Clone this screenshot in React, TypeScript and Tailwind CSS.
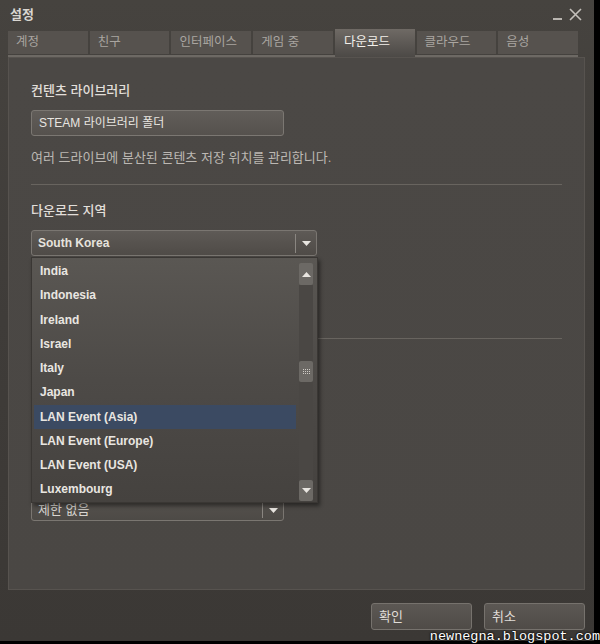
import React from "react";

const tabs = ["계정", "친구", "인터페이스", "게임 중", "다운로드", "클라우드", "음성"];

const regions = [
  "India",
  "Indonesia",
  "Ireland",
  "Israel",
  "Italy",
  "Japan",
  "LAN Event (Asia)",
  "LAN Event (Europe)",
  "LAN Event (USA)",
  "Luxembourg",
];

const Arrow = ({ up }: { up?: boolean }) => (
  <svg width="9" height="5" viewBox="0 0 9 5" className="block">
    <path d={up ? "M0 5 L4.5 0 L9 5 Z" : "M0 0 L9 0 L4.5 5 Z"} fill="#e8e5e0" />
  </svg>
);

export default function App() {
  return (
    <div
      className="relative flex h-[644px] w-[600px] overflow-hidden bg-black"
      style={{ fontFamily: '"Liberation Sans", "Noto Sans CJK KR", sans-serif' }}
    >
      <div className="flex h-[641px] w-[594px] flex-col bg-gradient-to-b from-[#46433f] via-[#3f3c39] to-[#3b3835]">
        {/* title bar */}
        <div className="flex h-[29px] items-center justify-between pl-[10px] pr-[12px]">
          <span className="text-[13px] font-bold text-[#d9d6d1]">설정</span>
          <div className="flex items-end gap-[7px]">
            <div className="mb-[1px] h-[2px] w-[9px] bg-[#b9b5b0]" />
            <svg width="13" height="13" viewBox="0 0 13 13">
              <path d="M1 1 L12 12 M12 1 L1 12" stroke="#c4c0bb" strokeWidth="1.6" />
            </svg>
          </div>
        </div>

        {/* tabs */}
        <div className="ml-[8px] flex h-[28px] w-[570px] items-end gap-[2px] border-b-2 border-[#6d6964]">
          {tabs.map((t) => {
            const active = t === "다운로드";
            return active ? (
              <div
                key={t}
                className="relative -mb-[2px] h-[28px] w-[80px] bg-gradient-to-b from-[#6f6a65] to-[#4c4946] pl-[9px] pt-[3px] text-[12.5px] leading-[20px] text-[#f3f0eb]"
              >
                {t}
              </div>
            ) : (
              <div
                key={t}
                className="mb-[1px] h-[23px] w-[80px] bg-[#56524e] pl-[8px] text-[12.5px] leading-[23px] text-[#a9a5a0]"
              >
                {t}
              </div>
            );
          })}
        </div>

        {/* panel */}
        <div className="ml-[8px] h-[533px] w-[577px] border border-[#57534f] bg-gradient-to-b from-[#4b4845] to-[#4a4744] px-[22px] pt-[24px]">
          <div className="text-[13px] font-medium leading-[18px] text-[#e2dfda]">컨텐츠 라이브러리</div>
          <div className="mt-[10px] flex h-[26px] w-[253px] items-center rounded-[3px] border border-[#7b7772] bg-gradient-to-b from-[#615d59] to-[#55514d] pl-[7px] text-[12px] text-[#e8e5e0]">
            STEAM 라이브러리 폴더
          </div>
          <div className="mt-[13px] text-[13px] leading-[18px] text-[#bcb8b3]">
            여러 드라이브에 분산된 콘텐츠 저장 위치를 관리합니다.
          </div>
          <div className="mt-[17px] h-[1px] w-[531px] bg-[#68645f]" />
          <div className="mt-[17px] text-[13px] font-medium leading-[18px] text-[#e2dfda]">다운로드 지역</div>

          {/* region dropdown */}
          <div className="relative mt-[10px] w-[286px]">
            <div className="flex h-[26px] items-center rounded-[3px] border border-[#7a7671] bg-gradient-to-b from-[#5e5a56] to-[#4f4b47]">
              <span className="flex-1 pl-[6px] text-[12px] font-bold text-[#e6e3de]">South Korea</span>
              <div className="h-[19px] w-[1px] bg-[#8a8681]" />
              <div className="flex w-[20px] justify-center">
                <Arrow />
              </div>
            </div>

            {/* open list */}
            <div className="absolute left-0 top-[27px] z-10 flex h-[246px] w-[287px] border border-[#3a3734] bg-gradient-to-b from-[#5a5753] via-[#4d4a47] to-[#45423f] shadow-[2px_3px_4px_rgba(0,0,0,0.45)]">
              <div className="w-[264px] pl-[2px] pt-[1px]">
                {regions.map((r) => (
                  <div
                    key={r}
                    className={
                      "h-[24.25px] pl-[6px] text-[12px] font-bold leading-[24px] text-[#e9e6e1] " +
                      (r === "LAN Event (Asia)" ? "bg-[#3b4a62]" : "")
                    }
                  >
                    {r}
                  </div>
                ))}
              </div>
              <div className="ml-[3px] flex w-[14px] flex-col pb-[1px] pt-[5px]">
                <div className="flex h-[22px] items-center justify-center rounded-[2px] bg-[#6c6965]">
                  <Arrow up />
                </div>
                <div className="flex-1 bg-[#4a4744]">
                  <div className="mt-[76px] flex h-[21px] items-center justify-center rounded-[2px] bg-[#6c6965]">
                    <div className="grid grid-cols-4 gap-[1px]">
                      {Array.from({ length: 12 }).map((_, i) => (
                        <div key={i} className="h-[1px] w-[1px] bg-[#cfcbc6]" />
                      ))}
                    </div>
                  </div>
                </div>
                <div className="flex h-[21px] items-center justify-center rounded-[2px] bg-[#6c6965]">
                  <Arrow />
                </div>
              </div>
            </div>
          </div>

          <div className="mt-[82px] h-[1px] w-[531px] bg-[#68645f]" />
          <div className="h-[160px]" />

          <div className="flex h-[22px] w-[253px] items-center rounded-[3px] border border-[#7a7671] bg-gradient-to-b from-[#55514d] to-[#4d4a46]">
            <span className="flex-1 pl-[6px] text-[13px] text-[#d9d6d1]">제한 없음</span>
            <div className="h-[16px] w-[1px] bg-[#8a8681]" />
            <div className="flex w-[20px] justify-center">
              <Arrow />
            </div>
          </div>
        </div>

        {/* footer buttons */}
        <div className="mt-[13px] flex justify-end gap-[12px] pr-[9px]">
          {["확인", "취소"].map((b) => (
            <div
              key={b}
              className="flex h-[27px] w-[101px] items-center rounded-[3px] border border-[#76726d] bg-gradient-to-b from-[#5c5854] to-[#4f4b47] pl-[7px] text-[13px] text-[#e0ddd8]"
            >
              {b}
            </div>
          ))}
        </div>
      </div>

      <div className="absolute bottom-[1px] right-0 text-[13.5px] leading-[13px] text-white [text-shadow:0_0_2px_#000,0_0_2px_#000]" style={{ fontFamily: '"Liberation Mono", monospace' }}>
        newnegna.blogspot.com
      </div>
    </div>
  );
}
